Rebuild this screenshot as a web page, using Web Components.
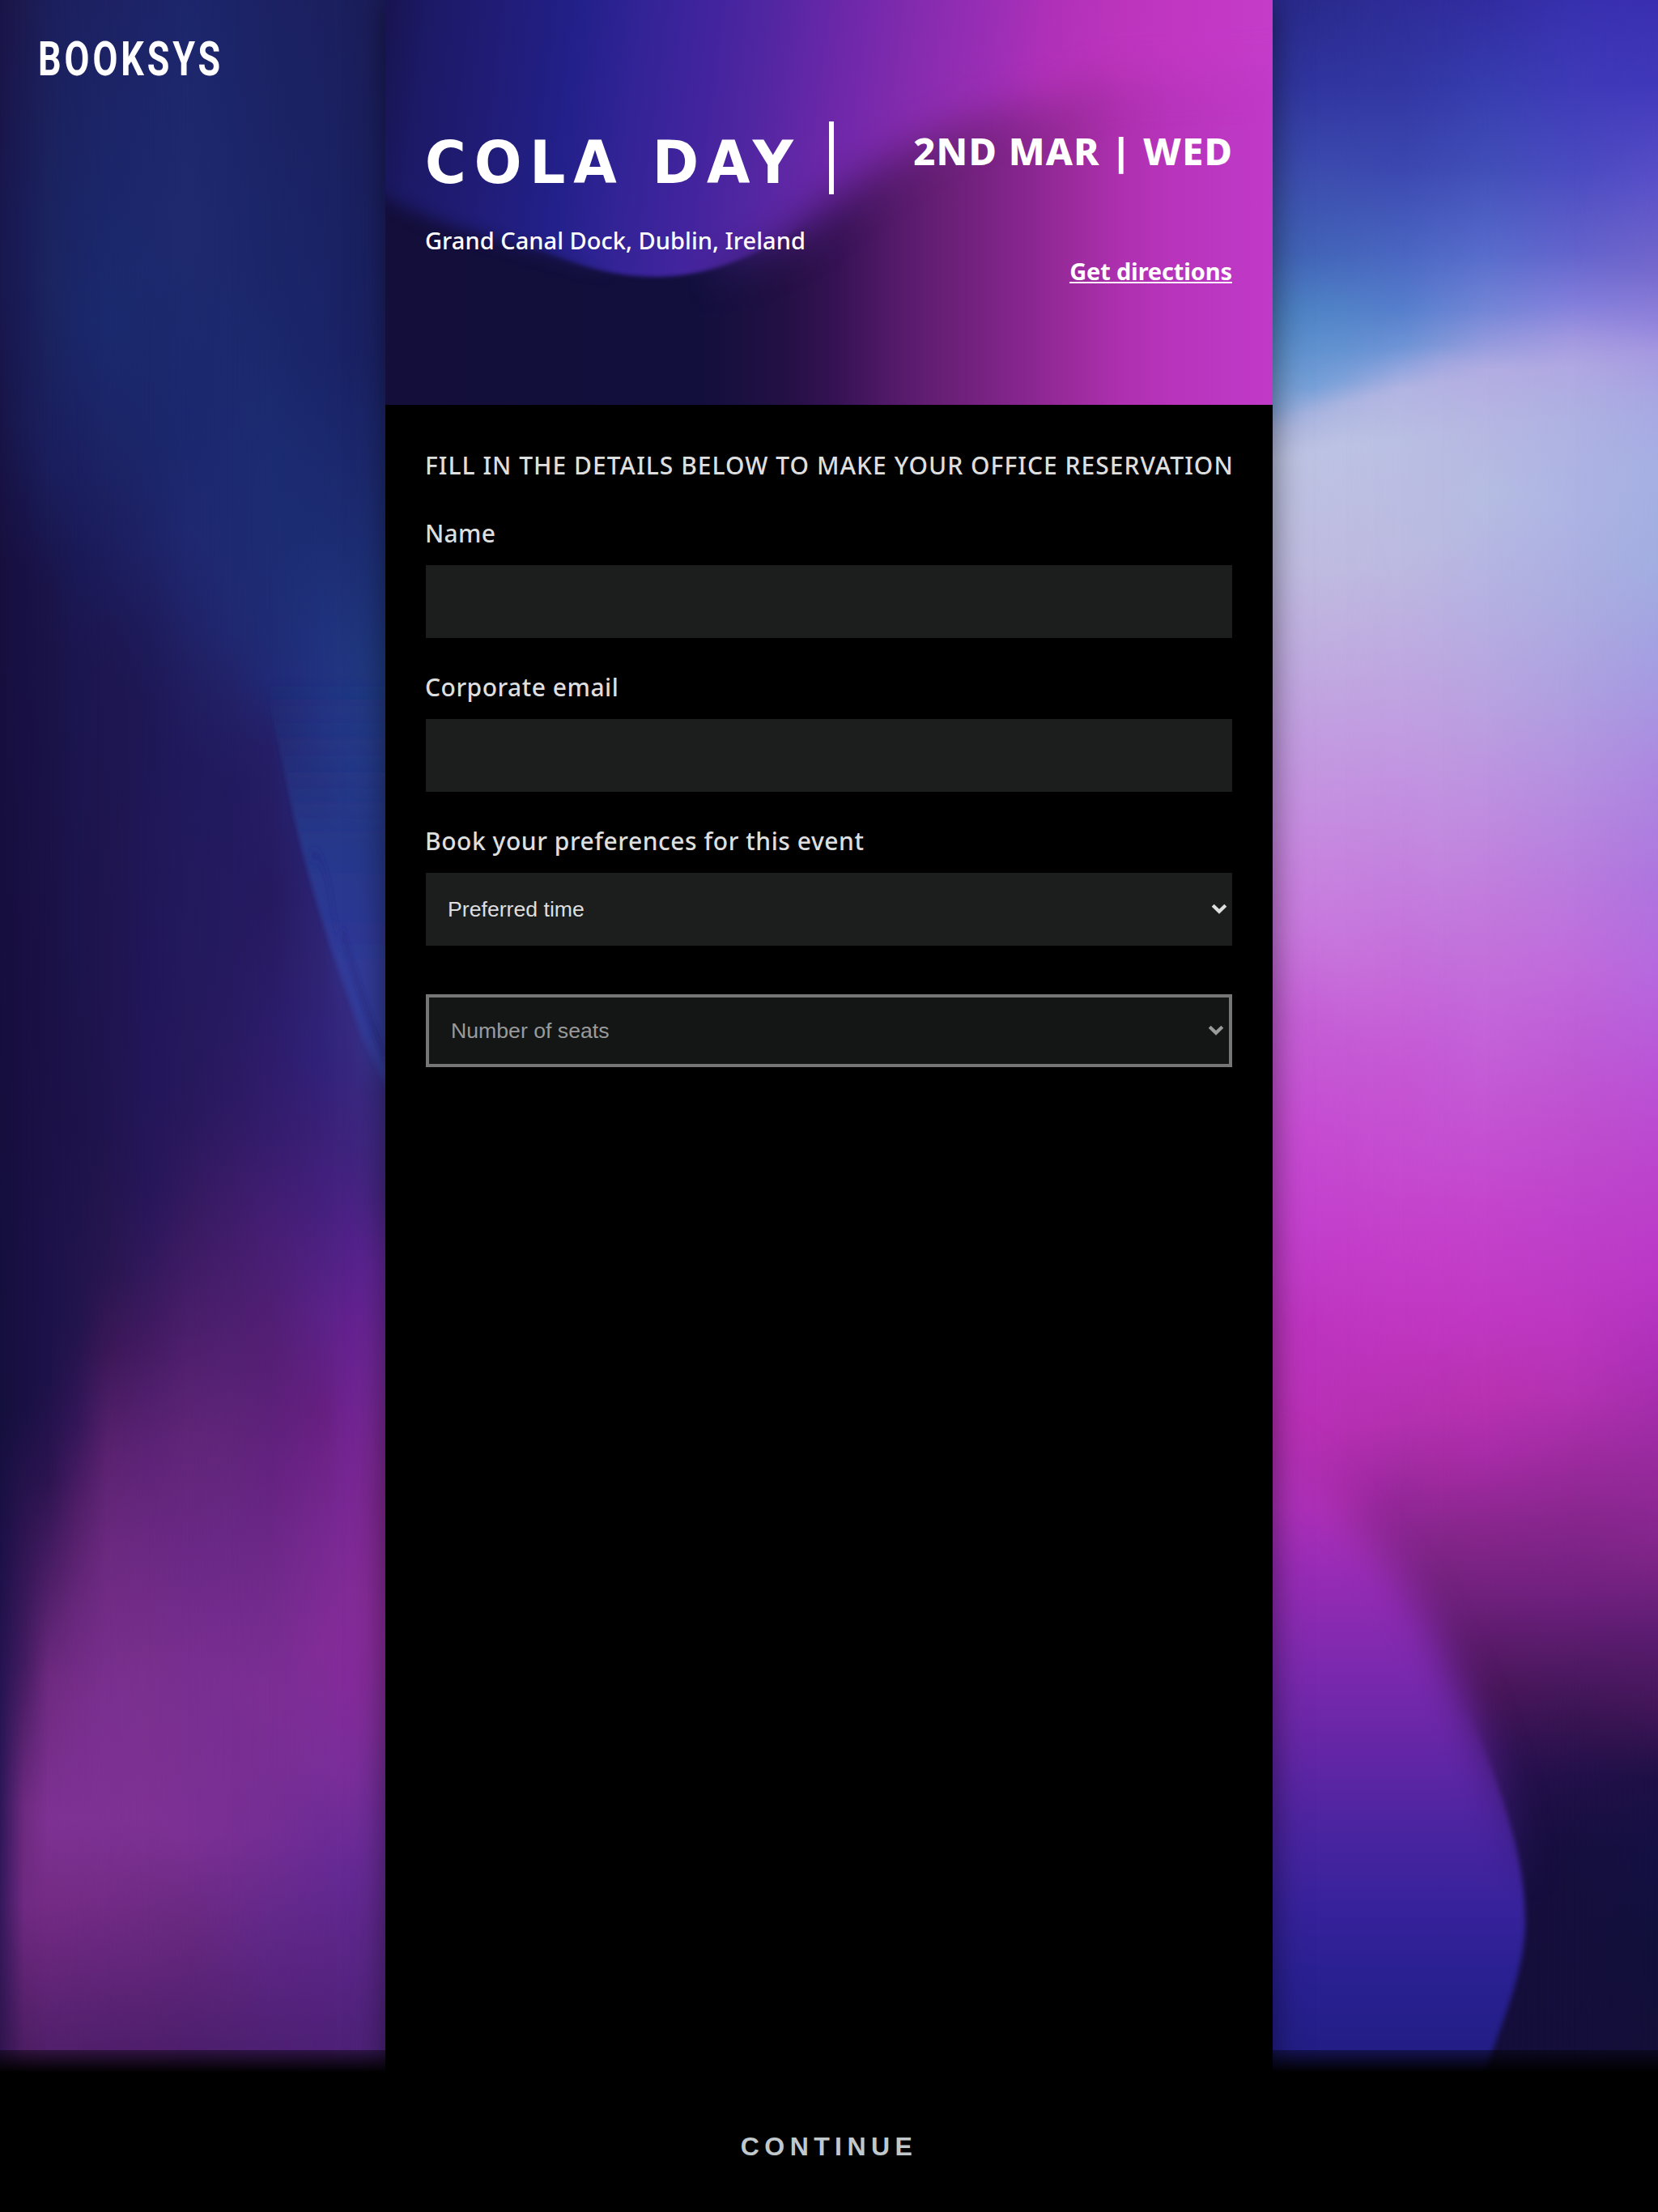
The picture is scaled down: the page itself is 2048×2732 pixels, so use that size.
<!DOCTYPE html>
<html lang="en">
<head>
<meta charset="utf-8">
<title>Booksys</title>
<style>
html,body{margin:0;height:100%;background:#000}
body{font-family:"Noto Sans","Open Sans",sans-serif;color:#dedede}
</style>
</head>
<body>
<booking-page></booking-page>
<script>
const define = (name, html, setup) => {
  const tpl = document.createElement('template');
  tpl.innerHTML = html;
  customElements.define(name, class extends HTMLElement {
    connectedCallback() {
      if (this.shadowRoot) return;
      this.attachShadow({ mode: 'open' }).append(tpl.content.cloneNode(true));
      if (setup) setup(this, this.shadowRoot);
    }
  });
};

/* Smooth colour field: every column is a run of colour stops, blended into its neighbour. */
const meshes = {
  left: { h: 1568, cols: [
    [0, '0 #1a1548,200 #191850,400 #17103e,700 #160f3e,1000 #14103c,1100 #1c1048,1250 #2a1656,1350 #34185c,1450 #30154f'],
    [30, '0 #1c1a50,150 #191c58,300 #191b55,400 #181146,700 #190f42,1000 #1a1044,1080 #2c1450,1180 #431b60,1280 #6e2a80,1350 #702a82,1450 #4e1e64'],
    [60, '0 #1b1f5c,200 #1b2560,330 #1a1e5c,420 #1a1448,700 #1a1146,980 #1e124a,1050 #2c1450,1120 #4c1e66,1190 #6e2a80,1290 #7e3294,1350 #742b84,1450 #52206c'],
    [95, '0 #1c2161,230 #1a2769,320 #1b2062,390 #1a1a58,460 #1b1650,800 #1d134a,940 #22144c,1010 #341658,1070 #501e68,1140 #68287c,1210 #782e8c,1290 #7e3294,1350 #732b85,1450 #51206c'],
    [133, '0 #1d2264,230 #1a2a6e,320 #1c2466,400 #1c1c5c,480 #1e164f,800 #20144e,900 #28164f,960 #3c1858,1030 #5a2270,1100 #6c2a80,1200 #7a3090,1290 #7e3294,1350 #722b86,1450 #501f6c'],
    [183, '0 #1d2468,190 #1d296e,310 #1b276a,390 #1e2266,440 #1e1c5c,500 #1e1856,700 #21165a,840 #26165a,890 #30185c,950 #421a62,1020 #5a2274,1090 #6a2882,1190 #7a308e,1290 #7e3294,1360 #6c2a82,1450 #501f6c'],
    [233, '0 #1d266c,150 #1f2a6e,300 #1b286e,380 #1f2870,430 #20246a,490 #211d60,540 #201a5c,700 #24195c,790 #28185c,860 #361a60,940 #4a1e6a,1020 #602578,1090 #692884,1180 #782e90,1300 #7c3094,1370 #66287e,1450 #4e1f6e'],
    [285, '0 #1c2468,180 #1d286c,310 #1c2a70,400 #1e2a72,450 #202870,500 #232066,560 #221a60,680 #261a60,780 #2c1a64,860 #3e1c6a,940 #4e1f70,1020 #60257a,1090 #6a2886,1190 #7a2e92,1300 #782f94,1370 #642884,1450 #4e2070'],
    [333, '0 #1c2264,200 #1b2669,330 #1c2c72,430 #1e2c74,480 #202a76,530 #251e66,640 #261a60,730 #2c1c6a,800 #341c6c,870 #461e74,960 #551f74,1040 #642280,1120 #702a8a,1200 #7c2e94,1300 #742e94,1370 #602888,1450 #4e2074'],
    [400, '0 #1b2060,250 #1a2468,370 #1c2c72,450 #20327e,520 #243284,600 #2a2474,680 #2f2474,750 #30227a,800 #3a2078,860 #46207e,930 #5a2288,1000 #661f80,1080 #762890,1170 #822c98,1250 #7a2e98,1320 #682a94,1450 #4e2076'],
    [433, '0 #1b1f5c,250 #1a2264,380 #1d2c72,460 #20367e,560 #273a8e,660 #303a98,710 #362c82,760 #38287e,820 #40247e,880 #52228a,940 #652290,1030 #762694,1130 #822c98,1190 #842a9a,1260 #7a2e9a,1330 #642a94,1450 #4e2278'],
    [476, '0 #1b1d5a,250 #1b2266,400 #1e3078,480 #203a82,600 #2c3e96,740 #343c98,775 #3a2c86,850 #482686,900 #64269a,980 #742898,1060 #802890,1160 #8a2c9a,1230 #7e2e9a,1300 #6c2c9a,1450 #4e227c']
  ]},
  right: { h: 1568, cols: [
    [0, '0 #2a2a8c,60 #303599,120 #3a4aa8,180 #4062b2,225 #4c80c0,258 #6293cc,288 #80a4d8,304 #aab4dc,325 #bdc3e1,400 #bfbce0,470 #c0abe0,520 #c29de0,600 #c788e0,660 #c878dd,720 #c560d6,800 #c64cd2,870 #c340cd,940 #bd34bf,1010 #b830b6,1070 #b030b0,1450 #150e3c'],
    [50, '0 #2a2a8c,60 #30359f,120 #3c4bae,180 #4264b8,220 #4f83c6,250 #6293d0,275 #78a0d8,293 #a9b4df,320 #bdc3e3,400 #bfbce0,470 #c0abe0,520 #c29de0,600 #c788e0,660 #c878dd,720 #c560d6,800 #c64cd2,870 #c340cd,940 #bd34bf,1010 #b830b6,1070 #a82caa,1110 #8c248e,1450 #150e3c'],
    [90, '0 #2b2b90,60 #3135a0,120 #3c4aae,180 #4565bb,220 #5282c8,250 #6694d2,270 #80a2da,286 #acb5e0,315 #bcc2e3,400 #bebbe0,470 #c0aae0,530 #c29ae1,610 #c684df,670 #c775dc,740 #c55bd5,810 #c54bd0,880 #c33eca,950 #bd34be,1010 #b530b2,1060 #a42aa6,1110 #84268a,1160 #621e74,1260 #341456,1450 #150e3c'],
    [125, '0 #2d2c94,60 #3236a0,120 #3c49af,180 #4866be,220 #5480ca,248 #6a93d4,266 #8ba4dc,281 #b0b5e1,315 #bbc1e3,400 #bdbae0,470 #bfa9e0,540 #c297e1,620 #c481de,680 #c770db,750 #c559d4,820 #c54bd0,890 #c33dc9,955 #be34bd,1010 #b430b0,1060 #9c28a0,1110 #802688,1160 #601c72,1210 #441658,1270 #281250,1450 #150e3c'],
    [160, '0 #2e2c98,60 #3236a2,120 #3c48b0,180 #4a66c2,220 #567fcc,246 #6f94d6,261 #92a5de,276 #b3b5e2,315 #babfe3,400 #bcbae0,470 #bfa9e1,550 #c294e2,620 #c480de,690 #c66bda,760 #c656d4,830 #c54acf,900 #c33cc8,960 #be34bc,1010 #b230ae,1060 #96289a,1110 #7e2488,1160 #5e1c70,1210 #42165a,1260 #2a1250,1300 #1a0f42,1450 #150e3c'],
    [210, '0 #302c9c,60 #3439a8,120 #3f4bb4,180 #5169c7,220 #6583d2,244 #8097d8,257 #a0a6df,271 #b3b1e2,310 #b8bbe2,380 #b9bbe1,450 #baade1,520 #be9ce0,590 #c28be0,660 #c376dc,740 #c45dd8,820 #c44dd0,880 #c43fca,945 #bf36c0,1000 #b531af,1045 #a12aa0,1090 #84268a,1140 #6a2078,1180 #521964,1230 #381356,1290 #1c1046,1330 #160e3c,1460 #140e3a'],
    [265, '0 #322ca0,60 #363cae,120 #424fb8,180 #586ccc,220 #7486d6,245 #979cde,262 #b2ade2,300 #b6b6e2,350 #b5bde2,430 #b5b0e2,500 #b9a2e0,570 #be8ee0,640 #c27adc,720 #c466da,800 #c452d2,860 #c444cc,930 #c038c4,990 #b832b0,1030 #a82ca8,1080 #8a268e,1120 #762282,1160 #5e1c6e,1200 #481658,1240 #301252,1280 #200f46,1340 #160e3c,1460 #140e3a'],
    [372, '0 #3730ae,60 #3f3ab8,120 #4a4ac0,180 #6464cc,215 #827edb,240 #a298e0,260 #b0a8e2,300 #aeb2e2,360 #adb4e4,430 #acace0,490 #aea0e0,550 #b490e0,620 #b87cde,680 #c06cdc,740 #be5cd6,800 #bf4ece,870 #be40ca,940 #bc36c0,990 #b232b2,1040 #9a2a9c,1080 #86268c,1130 #702080,1180 #501a64,1220 #381452,1260 #22104a,1310 #160f3e,1460 #140e3a'],
    [476, '0 #3a2eb0,60 #4038ba,130 #5a50c8,190 #7468cc,230 #9284dc,250 #a698e0,280 #a8a6e2,330 #a6b0e2,400 #a2aee0,470 #a49ee2,540 #ac8ae0,620 #ae76de,690 #b668de,760 #ba54d6,830 #bc44cc,900 #ba38c6,960 #ae30b8,1010 #a02ca6,1060 #902896,1110 #7c2486,1160 #5a1c70,1210 #421658,1260 #1e1046,1310 #151044,1380 #10103a,1460 #140f38']
  ]}
};
define('colour-mesh', `<style>
:host{display:grid;overflow:hidden}
:host>*,.c{grid-area:1/1;min-width:0;min-height:0}
::slotted(*){grid-area:1/1}
</style><slot></slot>`, (el, root) => {
  const m = meshes[el.getAttribute('name')];
  let px = 0;
  m.cols.forEach(([x, stops], i) => {
    const d = document.createElement('div');
    d.className = 'c';
    d.style.background = 'linear-gradient(180deg,' + stops.split(',').map(s => {
      const [y, c] = s.split(' ');
      return c + ' ' + (y / m.h * 100).toFixed(3) + '%';
    }) + ')';
    if (i) d.style.maskImage = `linear-gradient(90deg,transparent ${px}px,#000 ${x}px)`;
    px = x;
    root.insertBefore(d, root.querySelector('slot'));
  });
});

/* Text tracked out to a given measure. */
define('tracked-text', `<style>:host{display:block;white-space:nowrap}span{display:inline-block}</style><span><slot></slot></span>`, (el, root) => {
  const s = root.querySelector('span');
  const n = el.textContent.length;
  const ls = (el.getAttribute('measure') - s.offsetWidth) / (n - 1);
  s.style.letterSpacing = ls + 'px';
  s.style.marginRight = -ls + 'px';
});

define('brand-logo', `<style>:host{display:block;width:240px;height:80px;color:#fff;font:700 59px/80px Roboto,sans-serif}
tracked-text{transform:scaleX(.76);transform-origin:0 0;margin-left:-3px;width:300px}</style>
<tracked-text measure="296">BOOKSYS</tracked-text>`);

define('event-header', `<style>
:host{display:grid;height:500px;color:#fff}
:host>*{grid-area:1/1}
.bg{display:block}
.info{position:relative;display:flex;justify-content:space-between;padding:150px 50px 0}
h1{margin:0;width:504px;height:90px;box-sizing:border-box;border-right:6px solid #fff;font:700 73.5px/101px "DejaVu Sans",sans-serif}
h1 tracked-text{transform:scaleX(.94);transform-origin:0 0;margin-left:-1px}
.addr{margin-top:37px;margin-left:-1px;font-size:29px;line-height:40px;font-weight:500}
.when{display:flex;flex-direction:column;align-items:flex-end;padding-top:6px}
.date{font-size:47px;line-height:60px;font-weight:800}
a{color:#fff;margin-top:99px;font-size:29px;line-height:40px;font-weight:700;text-decoration:none;height:35px;box-sizing:border-box;border-bottom:2px solid #fff}
</style>
<svg class="bg" width="1096" height="500" viewBox="0 0 1096 500">
<defs>
<linearGradient id="t" x1="0" x2="1" y2=".06"><stop offset="0" stop-color="#181450"/><stop offset=".05" stop-color="#1c1966"/><stop offset=".13" stop-color="#201c76"/><stop offset=".22" stop-color="#22208a"/><stop offset=".29" stop-color="#322396"/><stop offset=".37" stop-color="#42249e"/><stop offset=".435" stop-color="#5226a2"/><stop offset=".53" stop-color="#7028aa"/><stop offset=".62" stop-color="#8a2cb0"/><stop offset=".69" stop-color="#9c2eb6"/><stop offset=".75" stop-color="#b030b8"/><stop offset=".83" stop-color="#bc34bc"/><stop offset=".92" stop-color="#c238c4"/><stop offset="1" stop-color="#c43cc8"/></linearGradient>
<linearGradient id="b" x1="0" x2="1"><stop offset="0" stop-color="#130e3a"/><stop offset=".35" stop-color="#120f3c"/><stop offset=".4" stop-color="#1a1040"/><stop offset=".45" stop-color="#241044"/><stop offset=".51" stop-color="#361254"/><stop offset=".575" stop-color="#541a6a"/><stop offset=".64" stop-color="#6c2078"/><stop offset=".7" stop-color="#80248a"/><stop offset=".765" stop-color="#982a9a"/><stop offset=".83" stop-color="#ae30b0"/><stop offset=".89" stop-color="#b834bc"/><stop offset="1" stop-color="#c03ac8"/></linearGradient>
<linearGradient id="fl"><stop offset="0" stop-color="#fff"/><stop offset=".12" stop-color="#fff"/><stop offset=".26" stop-color="#000"/></linearGradient>
<linearGradient id="fm"><stop offset=".12" stop-color="#000"/><stop offset=".26" stop-color="#fff"/><stop offset=".34" stop-color="#fff"/><stop offset=".48" stop-color="#000"/></linearGradient>
<linearGradient id="fr"><stop offset=".34" stop-color="#000"/><stop offset=".48" stop-color="#fff"/></linearGradient>
<filter id="b1" filterUnits="userSpaceOnUse" x="-200" y="-200" width="1500" height="900"><feGaussianBlur stdDeviation="10"/></filter>
<filter id="b2" filterUnits="userSpaceOnUse" x="-200" y="-200" width="1500" height="900"><feGaussianBlur stdDeviation="2.5"/></filter>
<filter id="b3" filterUnits="userSpaceOnUse" x="-200" y="-200" width="1500" height="900"><feGaussianBlur stdDeviation="26"/></filter>
<path id="w" d="M-190-190V170L0 245Q50 270 100 285T196 311C240 328 280 342 335 342C400 341 450 318 500 290C560 250 590 215 640 188C700 155 760 130 830 125L880 100 1290 80V-190Z"/>
<mask id="ml" maskUnits="userSpaceOnUse" x="0" y="0" width="1096" height="500"><rect width="1096" height="500" fill="url(#fl)"/></mask>
<mask id="mm" maskUnits="userSpaceOnUse" x="0" y="0" width="1096" height="500"><rect width="1096" height="500" fill="url(#fm)"/></mask>
<mask id="mr" maskUnits="userSpaceOnUse" x="0" y="0" width="1096" height="500"><rect width="1096" height="500" fill="url(#fr)"/></mask>
<mask id="shape" maskUnits="userSpaceOnUse" x="0" y="0" width="1096" height="500" style="mask-type:alpha"><g style="isolation:isolate">
<g mask="url(#ml)"><use href="#w" fill="#fff" filter="url(#b1)"/></g>
<g mask="url(#mm)" style="mix-blend-mode:plus-lighter"><use href="#w" fill="#fff" filter="url(#b2)"/></g>
<g mask="url(#mr)" style="mix-blend-mode:plus-lighter"><use href="#w" fill="#fff" filter="url(#b3)"/></g></g></mask>
</defs>
<rect width="1096" height="500" fill="url(#b)"/><rect width="1096" height="500" fill="url(#t)" mask="url(#shape)"/>
</svg>
<div class="info">
<div><h1><tracked-text measure="484">COLA DAY</tracked-text></h1><tracked-text class="addr" measure="470">Grand Canal Dock, Dublin, Ireland</tracked-text></div>
<div class="when"><tracked-text class="date" measure="394">2ND MAR | WED</tracked-text><a><tracked-text measure="201">Get directions</tracked-text></a></div>
</div>`);

define('form-field', `<style>
:host{display:flex;flex-direction:column;gap:20px}
.l{font-size:30px;font-weight:500;line-height:42px;height:40px;margin-left:-1px}
</style><div class="l"><slot name="label"></slot></div><slot></slot>`);

define('text-box', `<style>:host{display:block;height:90px;background:#1c1e1d}</style>`);

define('select-box', `<style>
:host{display:flex;align-items:center;justify-content:space-between;height:90px;box-sizing:border-box;background:#1c1e1d;padding:0 6px 0 27px;font:26.667px/30px "Liberation Sans",Arial,sans-serif;color:#dedede}
:host([disabled]){background:#141615;border:4px solid #767676;color:#9a9a9a;padding-right:6px}
svg{display:block}
</style><span><slot></slot></span><svg width="20" height="16" viewBox="0 0 20 16"><path d="M2.2 3.2 10 10.8 17.8 3.2" fill="none" stroke="currentColor" stroke-width="4.2"/></svg>`);

define('booking-panel', `<style>
:host{display:flex;flex-direction:column;background:#000;position:relative;box-shadow:0 0 36px rgba(0,0,0,.5)}
form{display:flex;flex-direction:column;padding:54px 50px 0}
.h{font-size:30px;font-weight:500;line-height:42px;height:40px;margin:0 0 44px -1px}
form-field{margin-bottom:40px}
select-box.last{margin-top:20px}
</style>
<event-header></event-header>
<form>
<tracked-text class="h" measure="998">FILL IN THE DETAILS BELOW TO MAKE YOUR OFFICE RESERVATION</tracked-text>
<form-field><tracked-text slot="label" measure="87">Name</tracked-text><text-box></text-box></form-field>
<form-field><tracked-text slot="label" measure="239">Corporate email</tracked-text><text-box></text-box></form-field>
<form-field><tracked-text slot="label" measure="542">Book your preferences for this event</tracked-text><select-box>Preferred time</select-box></form-field>
<select-box class="last" disabled>Number of seats</select-box>
</form>`);

define('continue-bar', `<style>
:host{display:flex;flex-direction:column;height:200px}
.fade{height:28px;background:linear-gradient(rgba(0,0,0,.4),#000)}
.btn{flex:1;background:#000;display:flex;justify-content:center;padding-top:73px;font:700 32px/36px "Liberation Sans",Arial,sans-serif;letter-spacing:6.4px;color:#c0c8cc}
</style><div class="fade"></div><div class="btn"><slot></slot></div>`);

define('booking-page', `<style>
:host{display:grid;width:2048px;height:2732px;overflow:hidden;grid-template:2532px 200px/476px 1096px 476px}
.left,.right{grid-row:1/3}
.left{grid-column:1}.right{grid-column:3}
booking-panel{grid-area:1/2/3/3}
brand-logo{grid-area:1/1;z-index:1;margin:33px 0 0 50px}
continue-bar{grid-area:2/1/3/4;z-index:2}
svg{display:block;z-index:0}
</style>
<colour-mesh class="left" name="left">
<svg width="476" height="2732" viewBox="0 0 1428 1568" preserveAspectRatio="none">
<defs><linearGradient id="g" gradientUnits="userSpaceOnUse" x1="0" y1="480" x2="0" y2="770"><stop offset="0" stop-color="#20347c" stop-opacity="0"/><stop offset=".4" stop-color="#26388a"/><stop offset=".7" stop-color="#303a98"/><stop offset="1" stop-color="#363a9a"/></linearGradient>
<filter id="f" filterUnits="userSpaceOnUse" x="900" y="400" width="700" height="450"><feGaussianBlur stdDeviation="7 3"/></filter></defs>
<path d="M1000 500C1050 540 1080 575 1130 610C1190 655 1280 700 1340 735L1440 772H1560V440H1000Z" fill="url(#g)" filter="url(#f)"/>
<path d="M1270 660C1320 695 1370 725 1430 748" fill="none" stroke="#292a80" stroke-opacity=".6" stroke-width="7" filter="url(#f)"/>
<path d="M1150 607C1210 600 1220 635 1250 660" fill="none" stroke="#292a80" stroke-opacity=".4" stroke-width="7" filter="url(#f)"/>
</svg></colour-mesh>
<colour-mesh class="right" name="right">
<svg width="476" height="2732" viewBox="0 0 476 2732">
<defs>
<linearGradient id="g2" gradientUnits="userSpaceOnUse" x1="0" y1="1742" x2="0" y2="2532"><stop offset="0" stop-color="#b630b6"/><stop offset=".15" stop-color="#ac30b8"/><stop offset=".24" stop-color="#9a2cb6"/><stop offset=".4" stop-color="#7c29ae"/><stop offset=".53" stop-color="#6426a6"/><stop offset=".66" stop-color="#4a24a0"/><stop offset=".77" stop-color="#38229c"/><stop offset=".88" stop-color="#2a2092"/><stop offset="1" stop-color="#221e86"/></linearGradient>
<linearGradient id="a1" x2="0" y2="1"><stop offset=".77" stop-color="#fff"/><stop offset=".86" stop-color="#000"/></linearGradient>
<linearGradient id="a2" x2="0" y2="1"><stop offset=".77" stop-color="#000"/><stop offset=".86" stop-color="#fff"/></linearGradient>
<filter id="f1" filterUnits="userSpaceOnUse" x="-200" y="1600" width="900" height="1200"><feGaussianBlur stdDeviation="24"/></filter>
<filter id="f2" filterUnits="userSpaceOnUse" x="-200" y="1600" width="900" height="1200"><feGaussianBlur stdDeviation="3"/></filter>
<path id="p" d="M-190 1700L20 1800C90 1870 150 1930 195 2010C230 2080 255 2140 280 2210C300 2270 312 2320 312 2374C312 2420 295 2470 272 2532L262 2560V2790H-190Z"/>
<mask id="k1" maskUnits="userSpaceOnUse" x="0" y="0" width="476" height="2732"><rect width="476" height="2732" fill="url(#a1)"/></mask>
<mask id="k2" maskUnits="userSpaceOnUse" x="0" y="0" width="476" height="2732"><rect width="476" height="2732" fill="url(#a2)"/></mask>
<mask id="sh" maskUnits="userSpaceOnUse" x="0" y="0" width="476" height="2732" style="mask-type:alpha"><g style="isolation:isolate"><g mask="url(#k1)"><use href="#p" fill="#fff" filter="url(#f1)"/></g><g mask="url(#k2)" style="mix-blend-mode:plus-lighter"><use href="#p" fill="#fff" filter="url(#f2)"/></g></g></mask>
</defs>
<rect width="476" height="2732" fill="url(#g2)" mask="url(#sh)"/>
</svg></colour-mesh>
<booking-panel></booking-panel>
<brand-logo></brand-logo>
<continue-bar>CONTINUE</continue-bar>`);
</script>
</body>
</html>
